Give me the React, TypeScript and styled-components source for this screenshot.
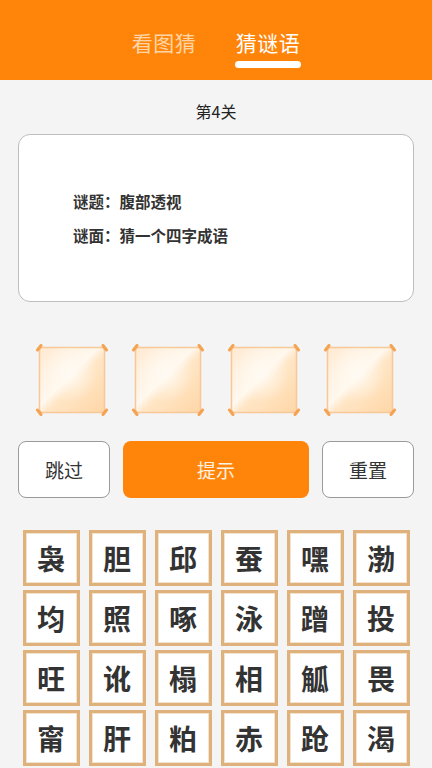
import React, { useId } from "react";
import styled, { createGlobalStyle } from "styled-components";

const Global = createGlobalStyle`
  html, body { margin: 0; padding: 0; background: #f4f4f4; }
  body { font-family: "Noto Sans CJK SC", "Noto Sans", sans-serif; overflow: hidden; }
  * { box-sizing: border-box; }
`;

const Page = styled.div`
  width: 432px;
  min-height: 768px;
  background: #f4f4f4;
  display: flex;
  flex-direction: column;
  align-items: center;
`;

const Header = styled.header`
  width: 100%;
  height: 80px;
  background: #ff850a;
  display: flex;
  justify-content: center;
  gap: 38px;
  padding-top: 28px;
`;

const Tab = styled.div<{ $active?: boolean }>`
  display: flex;
  flex-direction: column;
  align-items: center;
  font-size: 21px;
  line-height: 28px;
  letter-spacing: 0.5px;
  color: ${(p) => (p.$active ? "#ffffff" : "rgba(255, 225, 190, 0.9)")};
`;

const TabBar = styled.div<{ $active?: boolean }>`
  width: 66px;
  height: 7px;
  border-radius: 4px;
  margin-top: 5px;
  background: ${(p) => (p.$active ? "#ffffff" : "transparent")};
`;

const Level = styled.div`
  margin-top: 20px;
  font-size: 16px;
  line-height: 22px;
  color: #222;
`;

const Card = styled.div`
  margin-top: 12px;
  width: 396px;
  height: 168px;
  background: #fff;
  border: 1px solid #bdbdbd;
  border-radius: 12px;
  display: flex;
  flex-direction: column;
  justify-content: center;
  padding-left: 54px;
`;

const Line = styled.div`
  font-size: 15.5px;
  line-height: 34px;
  font-weight: 700;
  color: #333;
`;

const Slots = styled.div`
  margin-top: 42px;
  display: flex;
  gap: 24px;
`;

const SlotBox = styled.svg`
  width: 72px;
  height: 72px;
  display: block;
`;

function Slot() {
  const id = useId().replace(/:/g, "");
  return (
    <SlotBox viewBox="0 0 72 72">
      <defs>
        <linearGradient id={`g${id}`} x1="0" y1="0" x2="1" y2="1">
          <stop offset="0" stopColor="#ffe9cf" />
          <stop offset="0.45" stopColor="#fff8ee" />
          <stop offset="0.55" stopColor="#ffe6c6" />
          <stop offset="1" stopColor="#ffd6a6" />
        </linearGradient>
        <radialGradient id={`r${id}`} cx="0.45" cy="0.4" r="0.45">
          <stop offset="0" stopColor="#fffaf2" stopOpacity="0.95" />
          <stop offset="1" stopColor="#fffaf2" stopOpacity="0" />
        </radialGradient>
      </defs>
      <rect x="3.5" y="3.5" width="65" height="65" rx="3" fill={`url(#g${id})`} stroke="#f8c896" strokeWidth="1.5" />
      <rect x="3.5" y="3.5" width="65" height="65" rx="3" fill={`url(#r${id})`} />
      <g stroke="#f4a352" strokeWidth="3" strokeLinecap="round">
        <line x1="1.5" y1="6" x2="5" y2="1.5" />
        <line x1="67" y1="1.5" x2="70.5" y2="6" />
        <line x1="1.5" y1="66" x2="5" y2="70.5" />
        <line x1="67" y1="70.5" x2="70.5" y2="66" />
      </g>
    </SlotBox>
  );
}

const Actions = styled.div`
  margin-top: 25px;
  width: 396px;
  display: flex;
  gap: 13px;
`;

const Btn = styled.button<{ $primary?: boolean; $wide?: boolean }>`
  height: 57px;
  width: ${(p) => (p.$wide ? "186px" : "92px")};
  border-radius: 8px;
  border: ${(p) => (p.$primary ? "none" : "1px solid #9a9a9a")};
  background: ${(p) => (p.$primary ? "#ff850a" : "#ffffff")};
  color: ${(p) => (p.$primary ? "#fff1e0" : "#333")};
  font-family: "Noto Sans CJK SC", sans-serif;
  font-size: 19px;
  padding: 0;
`;

const Grid = styled.div`
  margin-top: 32px;
  display: grid;
  grid-template-columns: repeat(6, 57px);
  column-gap: 9px;
  row-gap: 4px;
`;

const Tile = styled.div`
  width: 57px;
  height: 56px;
  background: #fff;
  border: 3px solid #deb17d;
  display: flex;
  align-items: center;
  justify-content: center;
  font-size: 28px;
  font-weight: 700;
  color: #333;
  box-shadow: inset 0 0 0 1px #f3e3cf;
`;

const chars = [
  "袅", "胆", "邱", "蚕", "嘿", "渤",
  "均", "照", "啄", "泳", "蹭", "投",
  "旺", "讹", "榻", "相", "觚", "畏",
  "甯", "肝", "粕", "赤", "跄", "渴",
];

export default function App() {
  return (
    <Page>
      <Global />
      <Header>
        <Tab>
          看图猜
          <TabBar />
        </Tab>
        <Tab $active>
          猜谜语
          <TabBar $active />
        </Tab>
      </Header>
      <Level>第4关</Level>
      <Card>
        <Line>谜题：腹部透视</Line>
        <Line>谜面：猜一个四字成语</Line>
      </Card>
      <Slots>
        <Slot />
        <Slot />
        <Slot />
        <Slot />
      </Slots>
      <Actions>
        <Btn>跳过</Btn>
        <Btn $primary $wide>提示</Btn>
        <Btn>重置</Btn>
      </Actions>
      <Grid>
        {chars.map((c, i) => (
          <Tile key={i}>{c}</Tile>
        ))}
      </Grid>
    </Page>
  );
}
